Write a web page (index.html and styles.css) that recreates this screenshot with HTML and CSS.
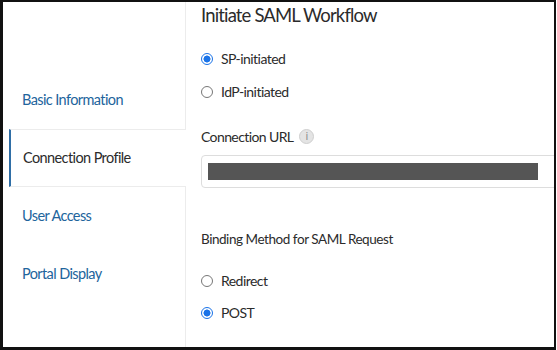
FILE: index.html
```html
<!DOCTYPE html>
<html>
<head>
<meta charset="utf-8">
<link rel="stylesheet" href="styles.css">
</head>
<body>
<div class="frame">
  <nav class="sidebar">
    <div class="nav-item">Basic Information</div>
    <div class="nav-item active">Connection Profile</div>
    <div class="nav-item">User Access</div>
    <div class="nav-item">Portal Display</div>
  </nav>
  <main class="content">
    <h1 class="title">Initiate SAML Workflow</h1>
    <div class="radios first">
      <label class="radio"><span class="dot checked"></span>SP-initiated</label>
      <label class="radio"><span class="dot"></span>IdP-initiated</label>
    </div>
    <div class="field-label">Connection URL <span class="info">i</span></div>
    <div class="input"><div class="redact"></div></div>
    <div class="section-label">Binding Method for SAML Request</div>
    <div class="radios">
      <label class="radio"><span class="dot"></span>Redirect</label>
      <label class="radio"><span class="dot checked"></span>POST</label>
    </div>
  </main>
</div>
</body>
</html>
```

FILE: styles.css
```css
* { box-sizing: border-box; }
html, body { margin: 0; padding: 0; background: #fff; }
body { width: 557px; height: 350px; overflow: hidden; font-family: Lato, "Open Sans", sans-serif; }
.frame {
  width: 556px;
  height: 350px;
  border-top: 2px solid #111;
  border-left: 3px solid #111;
  border-right: 2px solid #111;
  border-bottom: 3px solid #111;
  display: flex;
  overflow: hidden;
}
.sidebar {
  width: 183px;
  flex: none;
  border-right: 1px solid #ececec;
  padding-top: 69px;
  padding-left: 6px;
  display: flex;
  flex-direction: column;
}
.nav-item {
  height: 58px;
  display: flex;
  align-items: center;
  padding-left: 13px;
  font-size: 14.5px;
  color: #22649c;
  letter-spacing: -0.6px;
  padding-bottom: 2px;
}
.nav-item.active {
  color: #2b2b2b;
  border-left: 2px solid #2f6ea6;
  border-top: 1px solid #ececec;
  border-bottom: 1px solid #ececec;
  margin-right: -1px;
  background: #fff;
  position: relative;
  padding-left: 12px;
}
.content {
  flex: 1;
  padding-left: 15px;
  min-width: 0;
}
.title {
  margin: 2px 0 0;
  font-size: 18.5px;
  font-weight: 400;
  color: #2b2b2b;
  letter-spacing: -0.85px;
  line-height: 22px;
}
.radios { display: flex; flex-direction: column; gap: 12px; }
.radios.first { margin-top: 22px; }
.radio {
  display: flex;
  align-items: center;
  font-size: 14px;
  color: #2b2b2b;
  height: 21px;
  letter-spacing: -0.55px;
}
.dot {
  width: 12px; height: 12px;
  border: 1px solid #777;
  border-radius: 50%;
  margin-left: 0;
  margin-right: 8px;
  flex: none;
}
.dot.checked {
  border-color: #1a73e8;
  background: radial-gradient(circle, #1a73e8 0 3.2px, #fff 3.8px);
}
.field-label {
  margin-top: 24px;
  font-size: 14px;
  color: #2b2b2b;
  display: flex;
  align-items: center;
  letter-spacing: -0.6px;
  height: 20px;
}
.info {
  display: inline-flex;
  align-items: center;
  justify-content: center;
  width: 15px; height: 15px;
  margin-left: 6px;
  border-radius: 50%;
  background: #e4e4e4;
  border: 1px solid #cfcfcf;
  color: #888;
  font-size: 10px;
  letter-spacing: 0;
  font-family: "DejaVu Sans", sans-serif;
}
.input {
  margin-top: 9px;
  width: 380px;
  height: 33px;
  border: 1px solid #ddd;
  border-radius: 4px;
  padding: 7px 0 0 6px;
}
.redact { width: 330px; height: 17px; background: #555; }
.section-label {
  margin-top: 41px;
  font-size: 13.5px;
  color: #2b2b2b;
  letter-spacing: -0.45px;
  height: 20px;
  line-height: 20px;
}
.section-label + .radios { margin-top: 21px; gap: 11px; }
```
